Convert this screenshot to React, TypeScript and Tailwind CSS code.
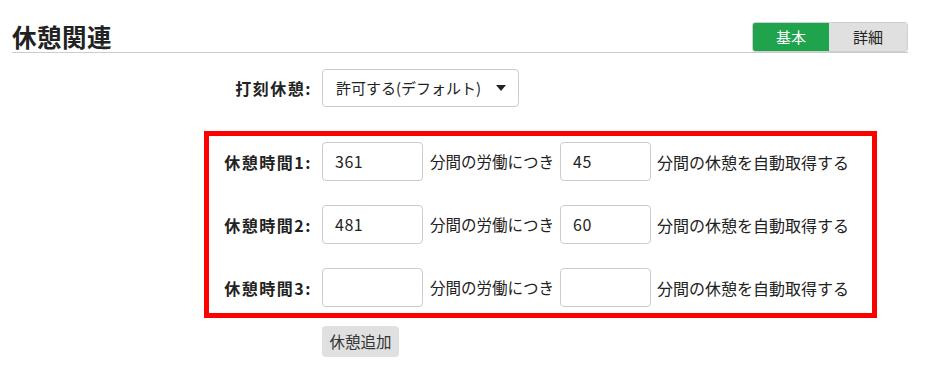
import React from "react";

const font = { fontFamily: '"Noto Sans CJK JP", "Noto Sans", sans-serif' };

const rows = [
  { label: "休憩時間1:", work: "361", rest: "45" },
  { label: "休憩時間2:", work: "481", rest: "60" },
  { label: "休憩時間3:", work: "", rest: "" },
];

const App = () => {
  return (
    <div className="w-[934px] h-[377px] bg-white text-[#222]" style={font}>
      <div className="ml-[12px] w-[896px] pt-[22px]">
        {/* header */}
        <div className="flex items-center justify-between h-[31px] border-b border-[#cccccc]">
          <h1 className="text-[24.5px] font-bold leading-[30px] tracking-[0.5px]">休憩関連</h1>
          <div className="flex h-[30px] rounded-[3px] border border-[#cfcfcf] overflow-hidden text-[15px] leading-[28px]">
            <button className="w-[76px] bg-[#1fa34d] text-white">基本</button>
            <button className="w-[78px] bg-[#e0e0e0] text-[#222]">詳細</button>
          </div>
        </div>

        {/* select */}
        <div className="flex items-center mt-[16px]">
          <label className="w-[300px] text-right text-[16px] font-bold tracking-[1.5px]">打刻休憩:</label>
          <div className="ml-[10px] w-[197px] h-[38px] border border-[#cccccc] rounded-[4px] flex items-center justify-between pl-[13px] pr-[12px] text-[15px]">
            <span>許可する(デフォルト)</span>
            <svg width="10" height="6" viewBox="0 0 10 6">
              <path d="M0 0 L10 0 L5 6 Z" fill="#222" />
            </svg>
          </div>
        </div>

        {/* break rows */}
        <div className="ml-[192px] mt-[24px] w-[673px] border-[5px] border-[#ff0000] pt-[6px] pb-[6px] flex flex-col gap-[24px]">
          {rows.map((r) => (
            <div key={r.label} className="flex items-center text-[16px]">
              <span className="w-[103px] text-right font-bold tracking-[1.5px]">{r.label}</span>
              <div className="ml-[10px] w-[101px] h-[39px] border border-[#cccccc] rounded-[4px] pl-[12px] leading-[37px] tracking-[0.5px]">
                {r.work}
              </div>
              <span className="ml-[7px] w-[130px] text-[15.5px]">分間の労働につき</span>
              <div className="w-[91px] h-[39px] border border-[#cccccc] rounded-[4px] pl-[12px] leading-[37px] tracking-[0.5px]">
                {r.rest}
              </div>
              <span className="ml-[6px]">分間の休憩を自動取得する</span>
            </div>
          ))}
        </div>

        <button className="ml-[310px] mt-[8px] w-[77px] h-[31px] bg-[#e0e0e0] rounded-[4px] text-[15.5px] text-[#333]">
          休憩追加
        </button>
      </div>
    </div>
  );
};

export default App;
